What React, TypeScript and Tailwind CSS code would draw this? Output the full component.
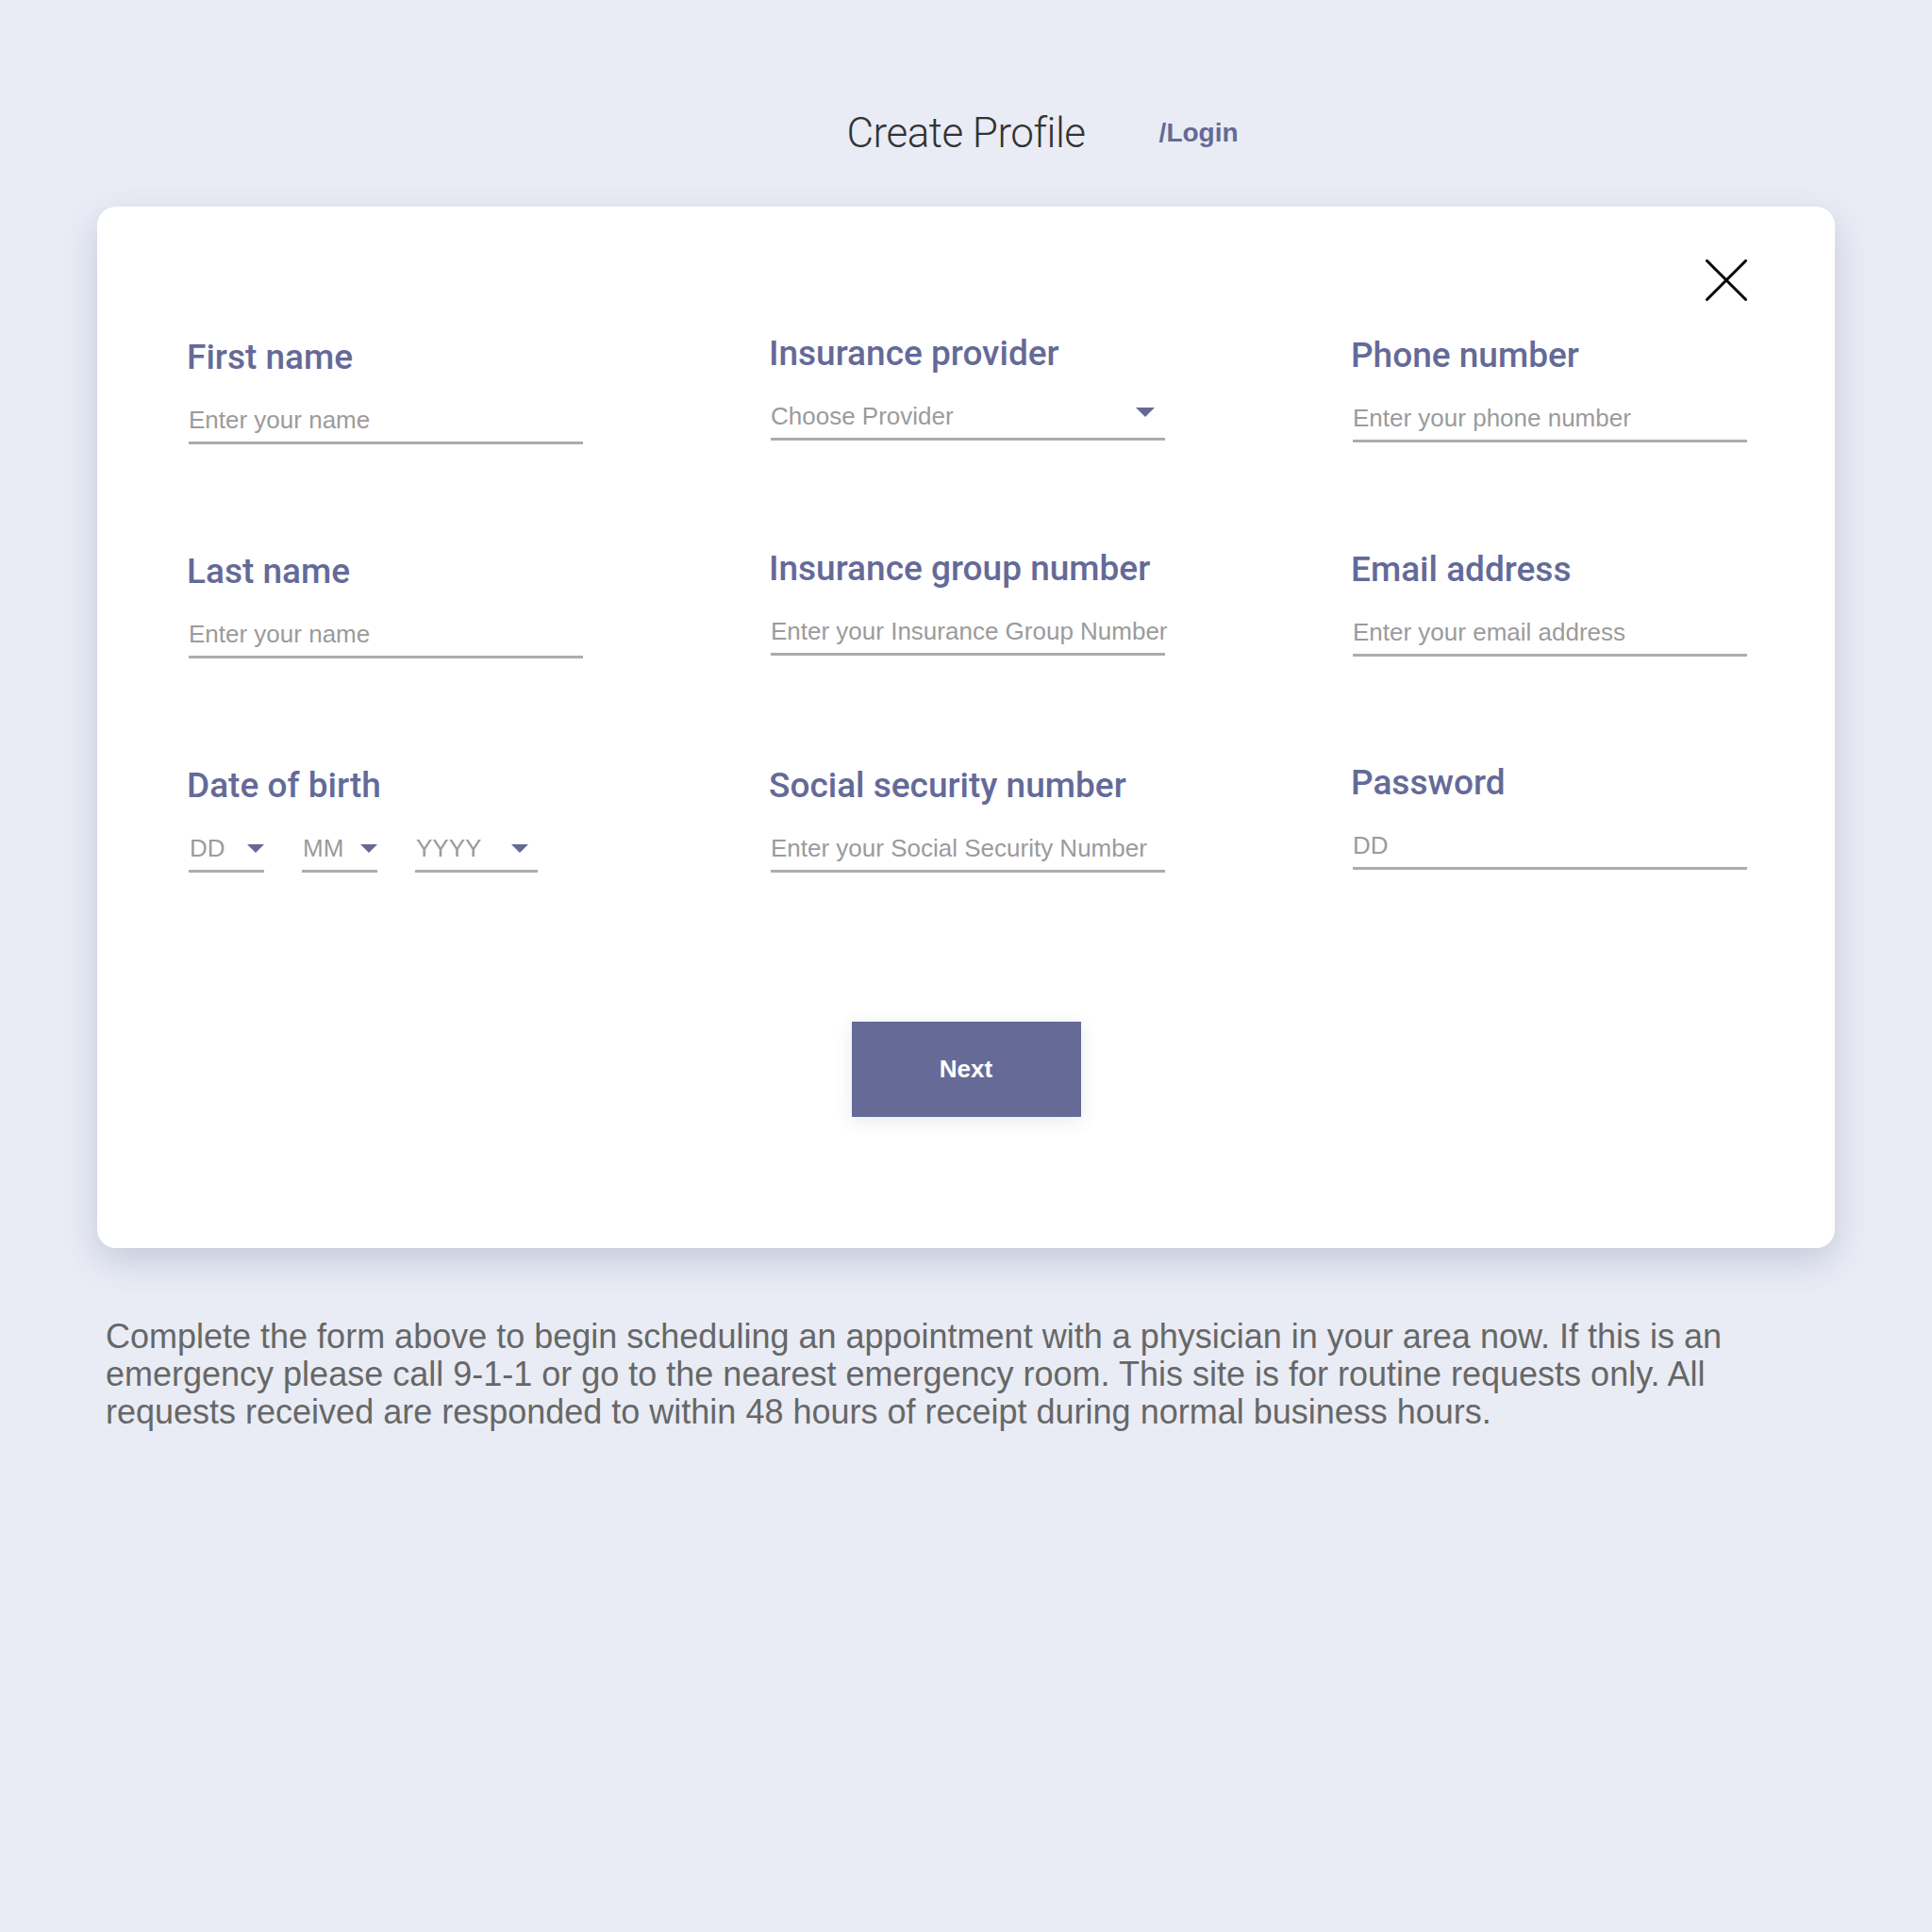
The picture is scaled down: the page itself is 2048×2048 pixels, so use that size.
import React from "react"

type FieldProps = {
  label: string
  placeholder: string
  dropdown?: boolean
  className?: string
}

const Caret: React.FC<{ w: number; h: number; className?: string }> = ({ w, h, className }) => {
  return (
    <svg width={w} height={h} viewBox={`0 0 ${w} ${h}`} className={className}>
      <polygon points={`0,0 ${w},0 ${w / 2},${h}`} fill="#646a96" />
    </svg>
  )
}

const Label: React.FC<{ children: React.ReactNode }> = ({ children }) => {
  return (
    <p className="-ml-[2px] font-['Roboto',sans-serif] font-medium text-[37px] leading-[44px] text-[#646a98]">
      {children}
    </p>
  )
}

const Field: React.FC<FieldProps> = ({ label, placeholder, dropdown, className }) => {
  return (
    <div className={`flex flex-col ${className ?? ""}`}>
      <Label>{label}</Label>
      <div className="mt-[29px] flex flex-row items-center justify-between border-b-[3px] border-[#acacac] pb-[8px]">
        <span className="whitespace-nowrap font-['Liberation_Sans',sans-serif] text-[26px] leading-[30px] text-[#9b9b9b]">
          {placeholder}
        </span>
        {dropdown && <Caret w={20} h={10} className="mr-[11px] mb-[8px]" />}
      </div>
    </div>
  )
}

const DateField: React.FC = () => {
  const parts = [
    { text: "DD", w: "w-[80px]", pad: "" },
    { text: "MM", w: "w-[80px]", pad: "" },
    { text: "YYYY", w: "w-[130px]", pad: "mr-[10px]" },
  ]
  return (
    <div className="flex flex-col">
      <Label>Date of birth</Label>
      <div className="mt-[29px] flex flex-row gap-[40px]">
        {parts.map((p, i) => {
          return (
            <div
              key={i}
              className={`${p.w} flex flex-row items-center justify-between border-b-[3px] border-[#acacac] pb-[8px]`}
            >
              <span className="pl-[1px] font-['Liberation_Sans',sans-serif] text-[26px] leading-[30px] text-[#9b9b9b]">
                {p.text}
              </span>
              <Caret w={18} h={9} className={p.pad} />
            </div>
          )
        })}
      </div>
    </div>
  )
}

export default function App() {
  return (
    <div className="min-h-screen bg-[#e9ecf5] pt-[115px] pb-[200px]">
      <div className="grid grid-cols-[1fr_auto_1fr] items-center">
        <div />
        <h1 className="font-['Roboto',sans-serif] font-light text-[44px] leading-[52px] tracking-[-0.5px] text-[#333333]">
          Create Profile
        </h1>
        <a
          href="#"
          className="ml-[78px] justify-self-start font-['Liberation_Sans',sans-serif] font-bold text-[28px] leading-[32px] text-[#646a96]"
        >
          /Login
        </a>
      </div>

      <div className="mx-auto mt-[52px] w-[1842px] rounded-[20px] bg-white px-[93px] pt-[56px] pb-[139px] pl-[97px] shadow-[0_14px_36px_rgba(60,70,115,0.2)]">
        <div className="flex flex-row justify-end">
          <svg width="44" height="44" viewBox="0 0 44 44" fill="none">
            <path d="M1.5 1.5 L42.5 42.5 M42.5 1.5 L1.5 42.5" stroke="#000" strokeWidth="3" strokeLinecap="round" />
          </svg>
        </div>

        <div className="mt-[38px] grid grid-cols-[418px_418px_418px] items-start gap-x-[199px] gap-y-[113px]">
          <Field label="First name" placeholder="Enter your name" />
          <Field label="Insurance provider" placeholder="Choose Provider" dropdown className="-mt-[4px]" />
          <Field label="Phone number" placeholder="Enter your phone number" className="-mt-[2px]" />
          <Field label="Last name" placeholder="Enter your name" />
          <Field
            label="Insurance group number"
            placeholder="Enter your Insurance Group Number"
            className="-mt-[3px]"
          />
          <Field label="Email address" placeholder="Enter your email address" className="-mt-[2px]" />
          <DateField />
          <Field label="Social security number" placeholder="Enter your Social Security Number" />
          <Field label="Password" placeholder="DD" className="-mt-[3px]" />
        </div>

        <div className="mt-[158px] flex flex-row justify-center pr-[4px]">
          <button className="h-[101px] w-[243px] bg-[#656b96] font-['Liberation_Sans',sans-serif] font-bold text-[26px] text-white shadow-[0_4px_18px_rgba(60,70,120,0.12)]">
            Next
          </button>
        </div>
      </div>

      <p className="mx-auto mt-[74px] w-[1842px] pl-[9px] pr-[53px] font-['Liberation_Sans',sans-serif] text-[36px] leading-[40px] text-[#676767]">
        Complete the form above to begin scheduling an appointment with a physician in your area now. If this is an
        emergency please call 9-1-1 or go to the nearest emergency room. This site is for routine requests only. All
        requests received are responded to within 48 hours of receipt during normal business hours.
      </p>
    </div>
  )
}
